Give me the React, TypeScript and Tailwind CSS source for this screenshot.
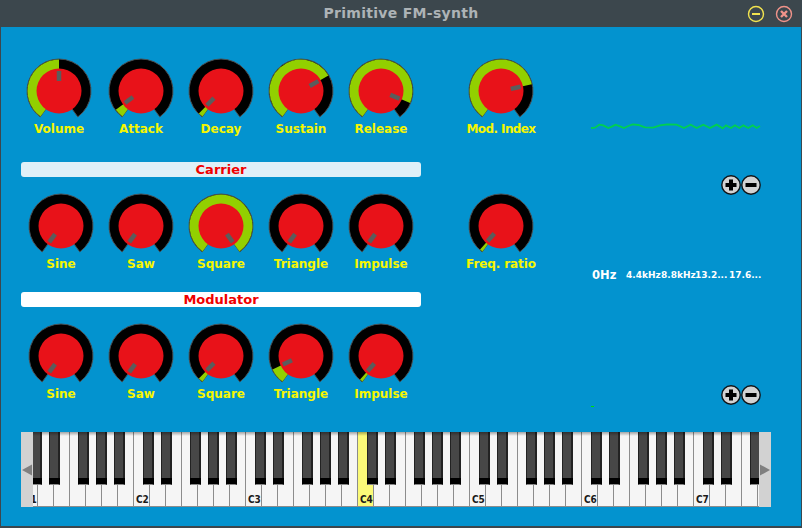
import React from "react";

const polar = (r: number, deg: number) => {
  const a = (deg * Math.PI) / 180;
  return [33 + r * Math.sin(a), 33 - r * Math.cos(a)];
};

const sector = (r0: number, r1: number, a0: number, a1: number) => {
  const [x0, y0] = polar(r1, a0);
  const [x1, y1] = polar(r1, a1);
  const [x2, y2] = polar(r0, a1);
  const [x3, y3] = polar(r0, a0);
  const large = a1 - a0 > 180 ? 1 : 0;
  return `M${x0} ${y0}A${r1} ${r1} 0 ${large} 1 ${x1} ${y1}L${x2} ${y2}A${r0} ${r0} 0 ${large} 0 ${x3} ${y3}Z`;
};

function Knob({
  label,
  value,
  className = "",
  labelClass = "",
}: {
  label: string;
  value: number;
  className?: string;
  labelClass?: string;
}) {
  const end = -144 + 288 * value;
  const [px0, py0] = polar(10, end);
  const [px1, py1] = polar(20, end);
  return (
    <div className={`flex w-20 shrink-0 flex-col items-center ${className}`}>
      <svg width="66" height="66" viewBox="0 0 66 66">
        <path d={sector(20, 32, -144, 144)} fill="#000" stroke="#4a4f52" strokeWidth="1" />
        {value > 0 && <path d={sector(20, 31.5, -144, end)} fill="#92d000" />}
        <circle cx="33" cy="33" r="22.5" fill="#e81219" />
        <line x1={px0} y1={py0} x2={px1} y2={py1} stroke="#5c5c5c" strokeWidth="4.5" />
      </svg>
      <div className={`-mt-px h-3 whitespace-nowrap font-['DejaVu_Sans',sans-serif] text-[12px] font-bold leading-[12px] text-[#f6f600] ${labelClass}`}>
        {label}
      </div>
    </div>
  );
}

function Bar({ title, className }: { title: string; className: string }) {
  return (
    <div className={`flex h-[15px] w-[400px] items-center justify-center rounded-[3px] font-['DejaVu_Sans',sans-serif] text-[13px] font-bold leading-[15px] text-[#f00000] ${className}`}>
      {title}
    </div>
  );
}

function ZoomButtons() {
  return (
    <div className="flex h-5 justify-end pr-[11px]">
      <button className="h-5 w-5">
        <svg width="20" height="20" viewBox="0 0 20 20">
          <circle cx="10" cy="10" r="9.2" fill="#d2d2d2" stroke="#101418" strokeWidth="1.4" />
          <path d="M10 4.5V15.5M4.5 10H15.5" stroke="#000" strokeWidth="4" />
        </svg>
      </button>
      <button className="h-5 w-5">
        <svg width="20" height="20" viewBox="0 0 20 20">
          <circle cx="10" cy="10" r="9.2" fill="#d2d2d2" stroke="#101418" strokeWidth="1.4" />
          <path d="M4.5 10H15.5" stroke="#000" strokeWidth="4" />
        </svg>
      </button>
    </div>
  );
}

const WAVE =
  "33,384 45,383 58,374 70,376 85,384 95,380 107,374 120,379 132,384 145,378 158,373 175,375 195,382 220,383 240,376 262,373 290,374 312,384 332,374 350,384 370,374 390,384 410,374 428,385 438,376 453,384 465,376 478,384 490,376 505,384 518,376 530,384 540,378";

const whiteCount = 47;
const blackOffsets = [9, 27, 56, 74, 92];
const octaves = [0, 1, 2, 3, 4, 5, 6];

function Piano() {
  return (
    <div className="ml-5 mt-8 flex h-[75px] w-[750px]">
      <div className="flex w-3 shrink-0 items-center justify-center bg-[#d2d2d2]">
        <svg width="12" height="14" viewBox="0 0 12 14">
          <path d="M1 7L11 1.5V12.5Z" fill="#808080" />
        </svg>
      </div>
      <div className="relative flex-1 overflow-hidden">
        <div className="-ml-[11px] flex h-full">
          {Array.from({ length: whiteCount }, (_, i) => {
            const isC = i % 7 === 0;
            const octave = i / 7 + 1;
            return (
              <div
                key={i}
                className={`flex w-4 shrink-0 items-end border-b border-r border-[#8c8c8c] pl-[2px] ${
                  i === 21 ? "bg-[#fbfa78]" : "bg-[#f5f5f5]"
                }`}
              >
                {isC && (
                  <span className="whitespace-nowrap font-['DejaVu_Sans_Condensed','DejaVu_Sans',sans-serif] text-[10px] font-bold leading-[12px] text-[#1a1a1a]">
                    C{octave}
                  </span>
                )}
              </div>
            );
          })}
        </div>
        {octaves.map((o) =>
          blackOffsets.map((b) => (
            <div
              key={`${o}-${b}`}
              className="absolute top-0 flex h-[53px] w-[11px] flex-col border-b border-l border-r-2 border-b-[#8c8c8c] border-l-[#222] border-r-[#222] bg-[#474747]"
              style={{ left: -11 + o * 112 + b }}
            >
              <div className="flex-1" />
              <div className="-mx-px -mr-[2px] h-[6px] bg-black" />
            </div>
          ))
        )}
        <div className="absolute inset-x-0 top-0 h-[4px] bg-gradient-to-b from-[#00000055] to-transparent" />
      </div>
      <div className="flex w-3 shrink-0 items-center justify-center bg-[#d2d2d2]">
        <svg width="12" height="14" viewBox="0 0 12 14">
          <path d="M11 7L1 1.5V12.5Z" fill="#808080" />
        </svg>
      </div>
    </div>
  );
}

export default function App() {
  return (
    <div className="flex h-[528px] w-[802px] flex-col overflow-hidden bg-[#3c474d]">
      <header className="grid h-[27px] shrink-0 grid-cols-[1fr_auto_1fr] items-center">
        <div />
        <div className="font-['DejaVu_Sans',sans-serif] text-[14px] font-bold tracking-[0.3px] text-[#adb3b6]">
          Primitive FM-synth
        </div>
        <div className="flex items-center justify-end gap-2 pr-2">
          <svg width="20" height="20" viewBox="0 0 20 20">
            <circle cx="10" cy="10" r="7.5" fill="none" stroke="#f2e34f" strokeWidth="1.4" />
            <path d="M6 10H14" stroke="#f2e34f" strokeWidth="2" />
          </svg>
          <svg width="20" height="20" viewBox="0 0 20 20">
            <circle cx="10" cy="10" r="7.5" fill="none" stroke="#f0938a" strokeWidth="1.4" />
            <path d="M7 7L13 13M13 7L7 13" stroke="#f0938a" strokeWidth="2.4" />
          </svg>
        </div>
      </header>

      <main className="mx-px mb-[2px] flex-1 bg-[#0393cf]">
        <div className="flex h-[373px] pl-5">
          <div className="w-[400px] shrink-0 pt-[31px]">
            <div className="flex">
              <Knob label="Volume" value={0.5} className="-ml-[2px] mr-[2px]" />
              <Knob label="Attack" value={0.06} />
              <Knob label="Decay" value={0.03} />
              <Knob label="Sustain" value={0.71} />
              <Knob label="Release" value={0.89} />
            </div>
            <Bar title="Carrier" className="mt-[27px] bg-[#dff0f8]" />
            <div className="mt-4 flex">
              <Knob label="Sine" value={0} />
              <Knob label="Saw" value={0} />
              <Knob label="Square" value={1} />
              <Knob label="Triangle" value={0} />
              <Knob label="Impulse" value={0} />
            </div>
            <Bar title="Modulator" className="mt-[22px] bg-white" />
            <div className="mt-4 flex">
              <Knob label="Sine" value={0} />
              <Knob label="Saw" value={0} />
              <Knob label="Square" value={0.03} />
              <Knob label="Triangle" value={0.1} />
              <Knob label="Impulse" value={0.02} />
            </div>
          </div>

          <div className="ml-10 w-20 shrink-0 pt-[31px]">
            <Knob label="Mod. Index" value={0.77} labelClass="tracking-[-0.6px]" />
            <div className="mt-[58px]">
              <Knob label="Freq. ratio" value={0.02} labelClass="tracking-[-0.1px]" />
            </div>
          </div>

          <div className="ml-10 w-[191px] shrink-0 pt-[93px]">
            <svg width="190" height="20" viewBox="3 360 570 60" className="block">
              <polyline points={WAVE} fill="none" stroke="#00d050" strokeWidth="5.5" />
            </svg>
            <div className="mt-[35px]">
              <ZoomButtons />
            </div>
            <div className="ml-[11px] mt-[73px] flex h-[14px] items-center whitespace-nowrap font-['DejaVu_Sans',sans-serif] font-bold leading-[14px] text-white">
              <span className="w-[34px] text-[11.5px]">0Hz</span>
              <span className="w-[35px] text-[9px]">4.4kHz</span>
              <span className="w-[34px] text-[9px]">8.8kHz</span>
              <span className="w-[34px] text-[9px]">13.2...</span>
              <span className="w-[34px] text-[9px]">17.6...</span>
            </div>
            <div className="mt-[103px]">
              <ZoomButtons />
            </div>
            <div className="ml-[10px] mt-px h-px w-[3px] bg-[#00e000]" />
          </div>
        </div>
        <Piano />
      </main>
    </div>
  );
}
